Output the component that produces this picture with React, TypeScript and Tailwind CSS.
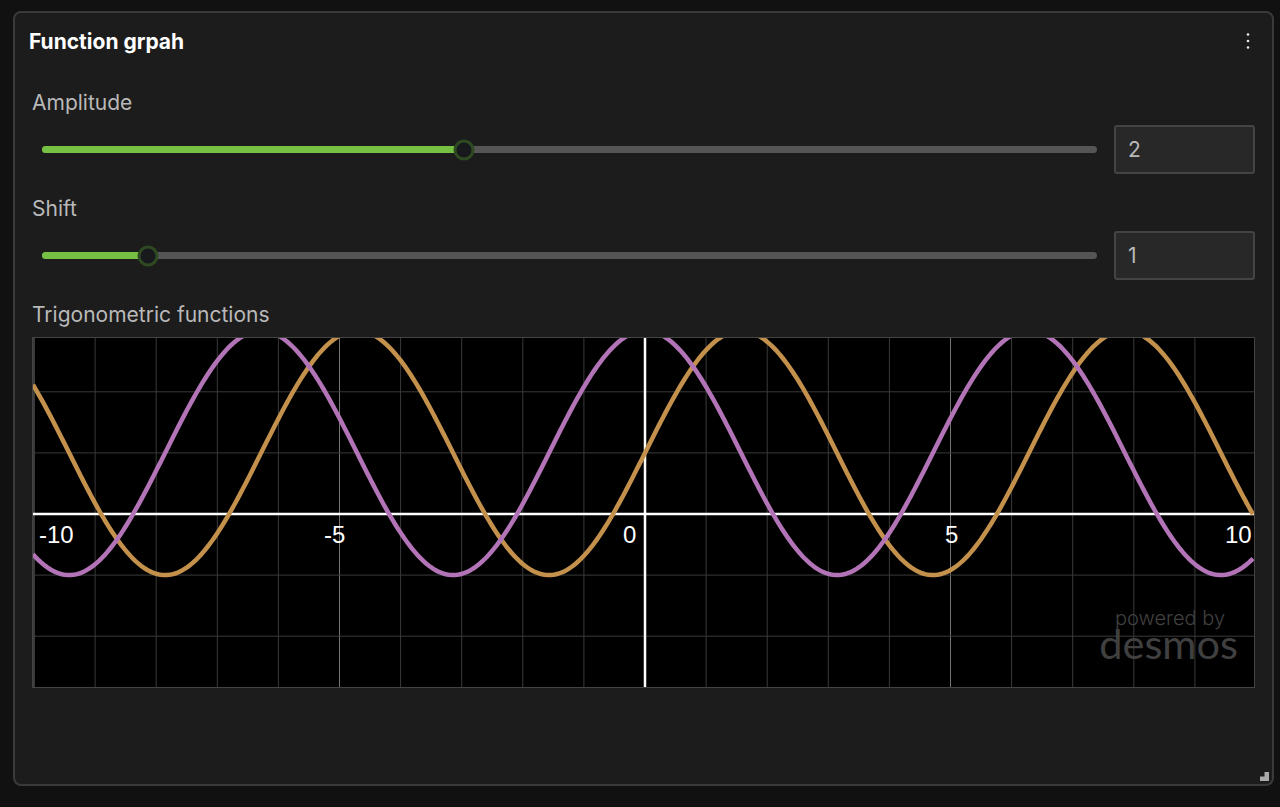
import { FC } from "react";

const W = 1221;
const H = 349;
const UNIT = 61.1;
const X0 = 612;
const Y0 = 176;

const curve = (fn: (x: number) => number) => {
  const pts: string[] = [];
  for (let px = 0; px <= W; px += 2) {
    const x = (px - X0) / UNIT;
    pts.push(`${px},${(Y0 - fn(x) * UNIT).toFixed(2)}`);
  }
  return pts.join(" ");
};

const Graph: FC = () => {
  const vertical = Array.from({ length: 21 }, (_, i) => i - 10);
  const horizontal = [-2, -1, 1, 2];
  return (
    <div className="ml-[1px] mt-[10px] h-[351px] w-[1223px] border border-[#444444] bg-black">
      <svg width={W} height={H} viewBox={`0 0 ${W} ${H}`} className="block overflow-hidden">
        {vertical.map((v) => (
          <line key={v} x1={X0 + v * UNIT} x2={X0 + v * UNIT} y1={0} y2={H} stroke={v % 5 === 0 ? "#747474" : "#3a3a3a"} strokeWidth={1} />
        ))}
        {horizontal.map((v) => (
          <line key={v} x1={0} x2={W} y1={Y0 - v * UNIT} y2={Y0 - v * UNIT} stroke="#3a3a3a" strokeWidth={1} />
        ))}
        <line x1={0} x2={W} y1={Y0} y2={Y0} stroke="#ffffff" strokeWidth={2.5} />
        <line x1={X0} x2={X0} y1={0} y2={H} stroke="#ffffff" strokeWidth={2.5} />
        <polyline points={curve((x) => 2 * Math.sin(x) + 1)} fill="none" stroke="#c4914c" strokeWidth={4.5} />
        <polyline points={curve((x) => 2 * Math.cos(x) + 1)} fill="none" stroke="#b274b7" strokeWidth={4.5} />
        <g fontFamily="'Liberation Sans', Arial, sans-serif" fontSize={24} fill="#ffffff">
          <text x={6} y={205}>-10</text>
          <text x={291} y={205}>-5</text>
          <text x={590} y={205}>0</text>
          <text x={912} y={205}>5</text>
          <text x={1192} y={205}>10</text>
        </g>
        <g fill="#404040" textAnchor="end">
          <text x={1192} y={287} fontFamily="Inter, sans-serif" fontSize={20} fontWeight={300}>powered by</text>
          <text x={1205} y={321} fontFamily="Lato, sans-serif" fontSize={41.5} fontWeight={400}>desmos</text>
        </g>
      </svg>
    </div>
  );
};

type SliderRowProps = { label: string; percent: number; value: string };

const SliderRow: FC<SliderRowProps> = ({ label, percent, value }) => (
  <div className="h-[106px]">
    <div className="ml-[1px] text-[21px] leading-[24px] text-[#b9b9b9]">{label}</div>
    <div className="mt-[10px] flex h-[49px] items-center">
      <div className="relative ml-[11px] h-[7px] w-[1055px] rounded-full bg-[#555555]">
        <div className="h-full rounded-full bg-[#76c043]" style={{ width: `${percent}%` }} />
        <div
          className="absolute top-1/2 h-[21px] w-[21px] -translate-x-1/2 -translate-y-1/2 rounded-full border-[3px] border-[#2f4a22] bg-[#17191d]"
          style={{ left: `${percent}%` }}
        />
      </div>
      <div className="ml-[17px] flex h-[49px] w-[141px] items-center rounded-[3px] border-2 border-[#444444] bg-[#282828] pl-[12px] pt-[1px] text-[21px] text-[#b9b9b9]">
        {value}
      </div>
    </div>
  </div>
);

export default function App() {
  return (
    <div className="h-[807px] w-[1280px] overflow-hidden bg-[#111111] pl-[13px] pt-[11px] font-['Inter',sans-serif]">
      <div className="relative h-[775px] w-[1261px] rounded-[8px] border-2 border-[#3a3a3a] bg-[#1c1c1c] pl-[16px]">
        <div className="flex h-[56px] items-center justify-between pr-[21px]">
          <div className="-ml-[2px] pt-[2px] text-[21px] font-bold text-white">Function grpah</div>
          <svg width="6" height="20" viewBox="0 0 6 20" fill="#e8e8e8">
            <circle cx="3" cy="3.5" r="1.3" />
            <circle cx="3" cy="10" r="1.3" />
            <circle cx="3" cy="16.5" r="1.3" />
          </svg>
        </div>
        <div className="pt-[22px]">
          <SliderRow label="Amplitude" percent={40} value="2" />
          <SliderRow label="Shift" percent={10} value="1" />
          <div className="ml-[1px] text-[21px] leading-[24px] text-[#b9b9b9]">Trigonometric functions</div>
          <Graph />
        </div>
        <svg className="absolute bottom-[3px] right-[3px]" width="9" height="9" viewBox="0 0 9 9" fill="#aaaaaa">
          <path d="M4.5 0H9V9H0V4.5H4.5z" />
        </svg>
      </div>
    </div>
  );
}
